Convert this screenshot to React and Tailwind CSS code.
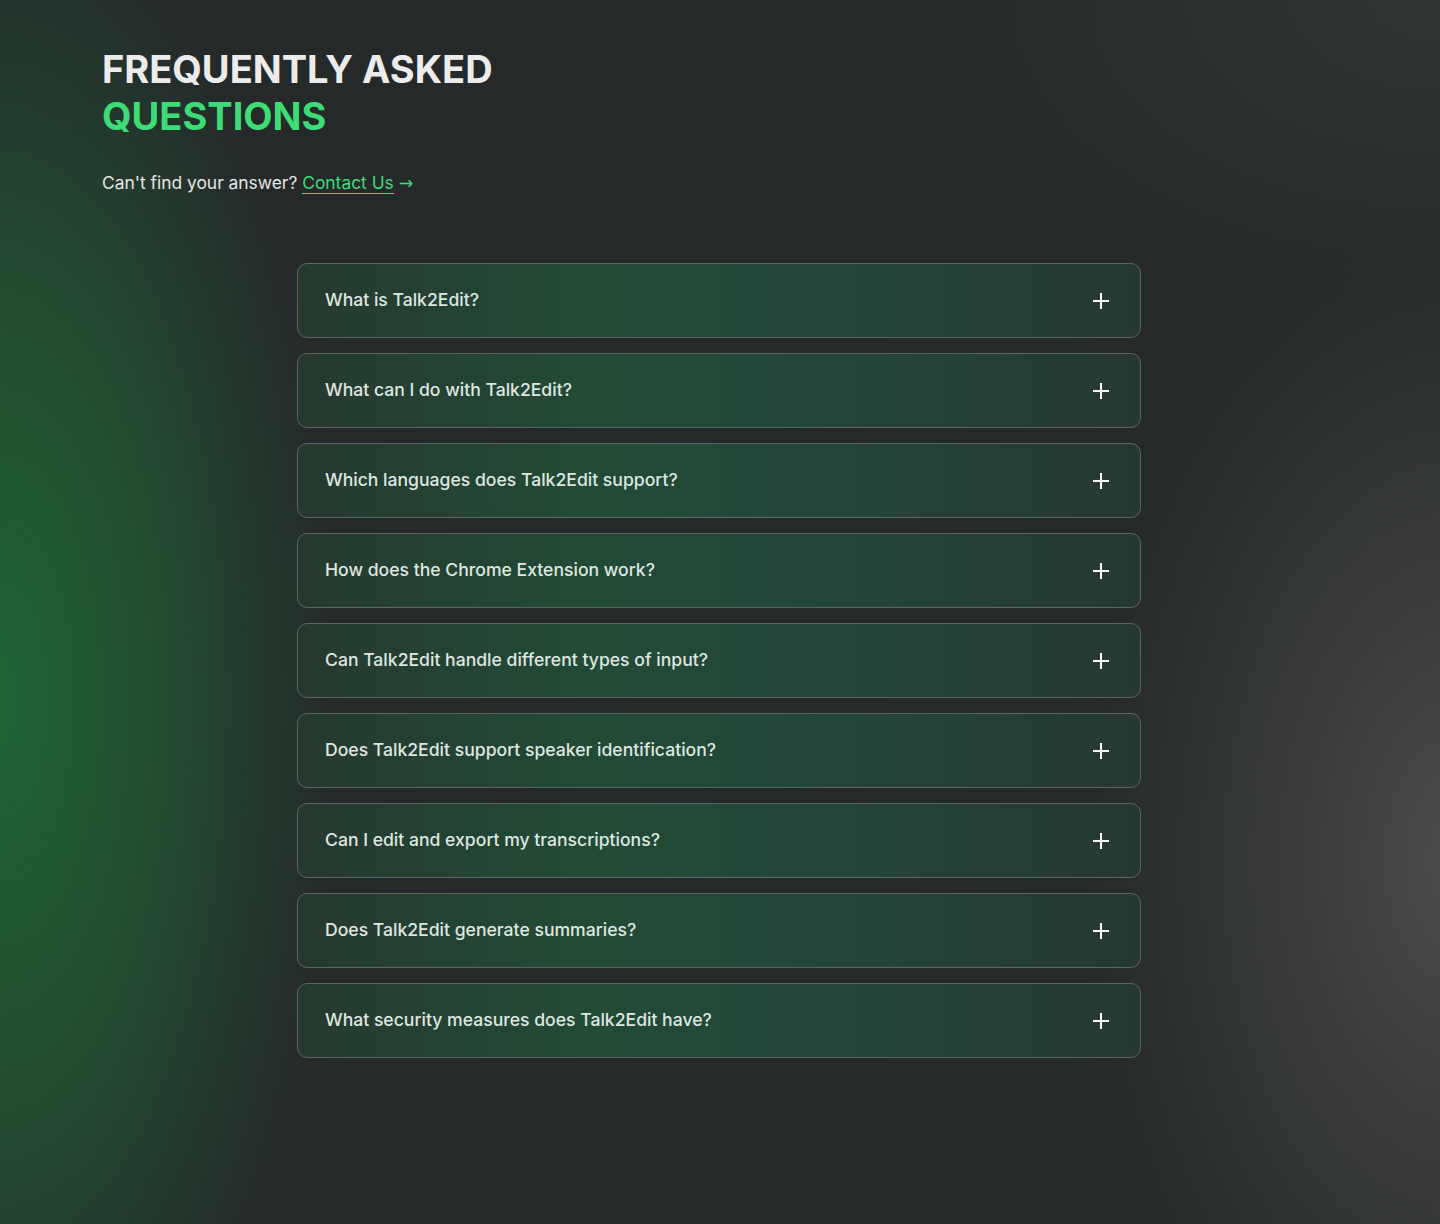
const questions = [
  'What is Talk2Edit?',
  'What can I do with Talk2Edit?',
  'Which languages does Talk2Edit support?',
  'How does the Chrome Extension work?',
  'Can Talk2Edit handle different types of input?',
  'Does Talk2Edit support speaker identification?',
  'Can I edit and export my transcriptions?',
  'Does Talk2Edit generate summaries?',
  'What security measures does Talk2Edit have?',
];

const PlusIcon = () => (
  <svg width="16" height="16" viewBox="0 0 16 16" fill="none" stroke="white" strokeWidth="2">
    <path d="M0 8h16M8 0v16" />
  </svg>
);

const FaqItem = ({ question }) => (
  <button
    type="button"
    className="flex h-[75px] w-full items-center justify-between rounded-[10px] border border-[#5b6562] bg-[linear-gradient(90deg,#26392f_0%,#224b35_35%,#23463a_60%,#263832_100%)] pl-[27px] pr-[31px] text-left"
  >
    <span className="text-[17.6px] font-medium text-[#dfe6e2]">{question}</span>
    <PlusIcon />
  </button>
);

export default function App() {
  return (
    <div
      className="min-h-[1224px] w-full bg-[#25292a] bg-[radial-gradient(ellipse_340px_820px_at_0px_700px,#1f6236_0%,rgba(33,90,52,0.8)_40%,rgba(37,41,42,0)_100%),radial-gradient(ellipse_380px_640px_at_1460px_860px,#4b4b4b_0%,rgba(70,70,70,0.65)_40%,rgba(37,41,42,0)_100%),radial-gradient(ellipse_500px_300px_at_1440px_0px,rgba(52,60,58,0.7)_0%,rgba(37,41,42,0)_100%)]"
      style={{ fontFamily: 'Inter, "Noto Sans", sans-serif' }}
    >
      <div className="px-[102px] pt-[46px]">
        <h1 className="text-[38px] font-bold leading-[47px] text-[#ececec]">
          FREQUENTLY ASKED
          <br />
          <span className="text-[#3ddc77]">QUESTIONS</span>
        </h1>
        <p className="mt-[30px] text-[17.4px] text-[#e6e6e6]">
          Can't find your answer?{' '}
          <a href="#" className="border-b border-[#3ddc77] text-[#3ddc77]">
            Contact Us
          </a>{' '}
          <span className="text-[#3ddc77]" style={{ fontFamily: '"DejaVu Sans", sans-serif' }}>
            →
          </span>
        </p>
      </div>
      <div className="ml-[297px] mt-[67px] flex w-[844px] flex-col gap-[15px] pb-[166px]">
        {questions.map((q) => (
          <FaqItem key={q} question={q} />
        ))}
      </div>
    </div>
  );
}
